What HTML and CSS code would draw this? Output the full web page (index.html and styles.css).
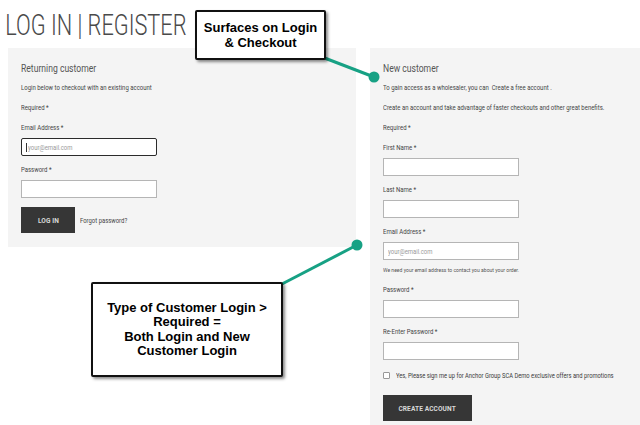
FILE: index.html
```html
<!DOCTYPE html>
<html lang="en">
<head>
    <meta charset="UTF-8">
    <meta name="viewport" content="width=device-width, initial-scale=1.0">
    <title>Log In | Register</title>
    <link rel="stylesheet" href="styles.css">
</head>
<body>

    <!-- Page title -->
    <h1 class="page-title">LOG IN | REGISTER</h1>

    <div class="columns">
        <!-- Returning customer -->
        <div class="panel panel-login">
            <h2>Returning customer</h2>
            <p class="row">Login below to checkout with an existing account</p>
            <p class="row">Required *</p>
            <label class="row">Email Address *</label>
            <div class="field focused"><span class="caret"></span><span class="ph">your@email.com</span></div>
            <label class="row gap">Password *</label>
            <div class="field"></div>
            <div class="actions">
                <button class="btn"><span>LOG IN</span></button>
                <a href="#" class="link">Forgot password?</a>
            </div>
        </div>

        <!-- New customer -->
        <div class="panel panel-register">
            <h2>New customer</h2>
            <p class="row">To gain access as a wholesaler, you can &nbsp;Create a free account .</p>
            <p class="row">Create an account and take advantage of faster checkouts and other great benefits.</p>
            <p class="row">Required *</p>
            <label class="row">First Name *</label>
            <div class="field"></div>
            <label class="row gap">Last Name *</label>
            <div class="field"></div>
            <label class="row gap">Email Address *</label>
            <div class="field"><span class="ph">your@email.com</span></div>
            <p class="row help">We need your email address to contact you about your order.</p>
            <label class="row">Password *</label>
            <div class="field"></div>
            <label class="row gap">Re-Enter Password *</label>
            <div class="field"></div>
            <div class="check-row">
                <span class="check"></span>
                <span class="check-text">Yes, Please sign me up for Anchor Group SCA Demo exclusive offers and promotions</span>
            </div>
            <button class="btn btn-create"><span>CREATE ACCOUNT</span></button>
        </div>
    </div>

    <!-- Annotation overlay -->
    <svg class="connectors" width="640" height="425" viewBox="0 0 640 425">
        <line x1="322" y1="57" x2="374" y2="77" stroke="#17a184" stroke-width="3"/>
        <circle cx="374" cy="77" r="5.5" fill="#17a184"/>
        <line x1="282" y1="284" x2="357" y2="245" stroke="#17a184" stroke-width="3"/>
        <circle cx="357" cy="245" r="5.5" fill="#17a184"/>
    </svg>

    <div class="callout callout-top">Surfaces on Login<br>&amp; Checkout</div>
    <div class="callout callout-bottom">Type of Customer Login &gt;<br>Required =<br>Both Login and New<br>Customer Login</div>

</body>
</html>
```

FILE: styles.css
```css
* {
    margin: 0;
    padding: 0;
    box-sizing: border-box;
}

body {
    width: 640px;
    height: 425px;
    overflow: hidden;
    background: #fff;
    color: #555;
    font-family: Roboto, sans-serif;
    position: relative;
}

.page-title {
    font-weight: 300;
    font-size: 29px;
    line-height: 34px;
    color: #4a4a4a;
    padding: 8px 0 0 7px;
    height: 48px;
    white-space: nowrap;
    transform: scaleX(0.75);
    transform-origin: left top;
}

.columns {
    display: flex;
    align-items: flex-start;
    gap: 14px;
    padding-left: 8px;
    height: 377px;
    overflow: hidden;
}

.panel {
    background: #f4f4f4;
    padding: 10px 13px 14px;
}

.panel-login {
    width: 348px;
    flex-shrink: 0;
}

.panel-register {
    flex: 1;
    height: 377px;
}

.panel h2 {
    font-weight: 400;
    font-size: 20px;
    line-height: 20px;
    color: #555;
    white-space: nowrap;
    transform: scale(0.43, 0.5);
    transform-origin: left center;
}

.row {
    display: block;
    font-size: 13px;
    line-height: 20px;
    color: #444;
    white-space: nowrap;
    transform: scale(0.46, 0.5);
    transform-origin: left center;
}

.row.gap {
    margin-top: 4px;
}

.row.help {
    color: #555;
    transform: scale(0.39, 0.45);
}

.field {
    width: 136px;
    height: 18px;
    background: #fff;
    border: 1px solid #b5b5b5;
    padding-left: 4px;
    display: flex;
    align-items: center;
}

.field.focused {
    border: 1.5px solid #2b2b2b;
    border-radius: 2px;
}

.ph {
    display: inline-block;
    font-size: 13px;
    color: #999;
    white-space: nowrap;
    transform: scale(0.455, 0.5);
    transform-origin: left center;
}

.caret {
    width: 1px;
    height: 9px;
    background: #333;
    margin-right: 1px;
}

.actions {
    display: flex;
    align-items: center;
    gap: 5px;
    margin-top: 9px;
}

.btn {
    background: #363636;
    color: #d8d8d8;
    border: none;
    height: 26px;
    width: 54px;
    display: flex;
    align-items: center;
    justify-content: center;
}

.btn span {
    display: inline-block;
    font-family: Roboto, sans-serif;
    font-weight: bold;
    font-size: 14px;
    letter-spacing: 0.2px;
    white-space: nowrap;
    transform: scale(0.47, 0.55);
}

.link {
    display: inline-block;
    font-size: 13px;
    color: #444;
    text-decoration: none;
    white-space: nowrap;
    transform: scale(0.455, 0.5);
    transform-origin: left center;
}

.check-row {
    display: flex;
    align-items: center;
    height: 20px;
    margin-top: 5px;
}

.check {
    width: 7px;
    height: 7px;
    flex-shrink: 0;
    border: 1px solid #999;
    background: #fff;
    border-radius: 1px;
    margin-right: 6px;
}

.check-text {
    display: inline-block;
    font-size: 13px;
    color: #3a3a3a;
    white-space: nowrap;
    transform: scale(0.445, 0.52);
    transform-origin: left center;
}

.btn-create {
    width: 89px;
    margin-top: 10px;
}

/* Annotation callouts */
.connectors {
    position: absolute;
    top: 0;
    left: 0;
}

.callout {
    position: absolute;
    background: #fff;
    border: 2px solid #111;
    border-radius: 2px;
    box-shadow: 2px 2px 3px rgba(0, 0, 0, 0.45);
    font-family: "Liberation Sans", Arial, sans-serif;
    font-weight: bold;
    font-size: 13px;
    line-height: 15px;
    color: #000;
    text-align: center;
    display: flex;
    align-items: center;
    justify-content: center;
}

.callout-top {
    left: 195px;
    top: 10px;
    width: 131px;
    height: 50px;
}

.callout-bottom {
    left: 91px;
    top: 282px;
    width: 192px;
    height: 95px;
    line-height: 14.5px;
}
```
